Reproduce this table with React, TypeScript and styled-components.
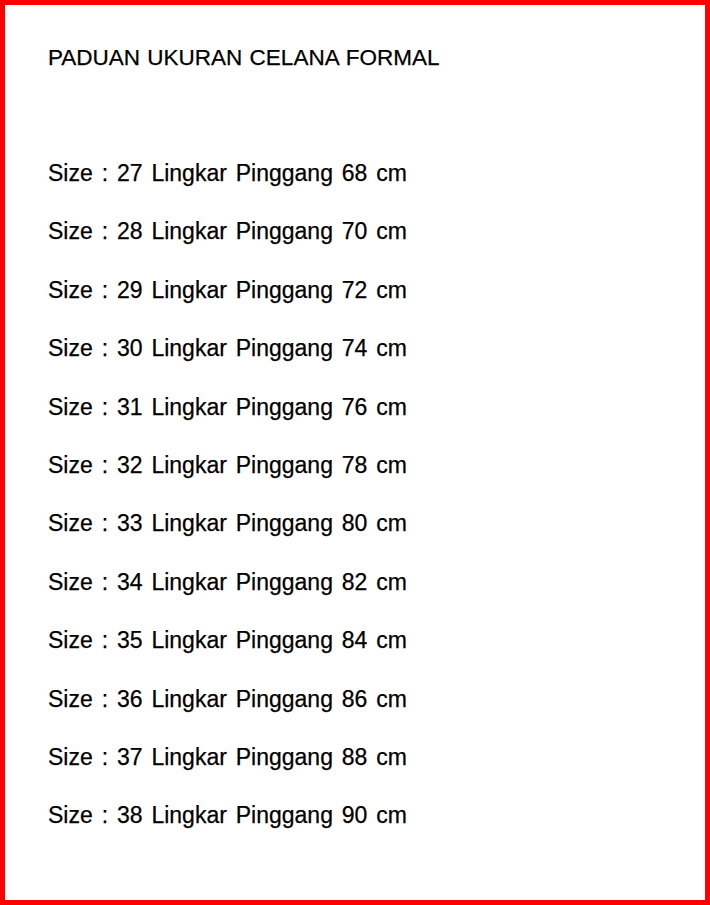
import React from 'react';
import styled, { createGlobalStyle } from 'styled-components';

const GlobalStyle = createGlobalStyle`
  html, body {
    margin: 0;
    padding: 0;
    background: #ffffff;
  }
`;

const sizes = [
  { size: 27, waist: 68 },
  { size: 28, waist: 70 },
  { size: 29, waist: 72 },
  { size: 30, waist: 74 },
  { size: 31, waist: 76 },
  { size: 32, waist: 78 },
  { size: 33, waist: 80 },
  { size: 34, waist: 82 },
  { size: 35, waist: 84 },
  { size: 36, waist: 86 },
  { size: 37, waist: 88 },
  { size: 38, waist: 90 },
];

const App: React.FC = () => {
  return (
    <Frame>
      <GlobalStyle />
      <Title>PADUAN UKURAN CELANA FORMAL</Title>
      <List>
        {sizes.map((s) => (
          <Row key={s.size}>
            Size : {s.size} Lingkar Pinggang {s.waist} cm
          </Row>
        ))}
      </List>
    </Frame>
  );
};

const Frame = styled.div`
  box-sizing: border-box;
  width: 710px;
  height: 905px;
  border: 5px solid #ff0000;
  background-color: white;
  padding: 39px 0 0 43px;
  font-family: 'Liberation Sans', Arial, sans-serif;
  color: #000000;
  -webkit-text-stroke: 0.25px #000000;
`;

const Title = styled.h1`
  margin: 0;
  font-size: 22.5px;
  font-weight: normal;
  line-height: 28px;
  word-spacing: 1px;
`;

const List = styled.div`
  display: flex;
  flex-direction: column;
  gap: 30.4px;
  margin-top: 87px;
`;

const Row = styled.div`
  font-size: 23px;
  line-height: 28px;
  word-spacing: 2.5px;
`;

export default App;
